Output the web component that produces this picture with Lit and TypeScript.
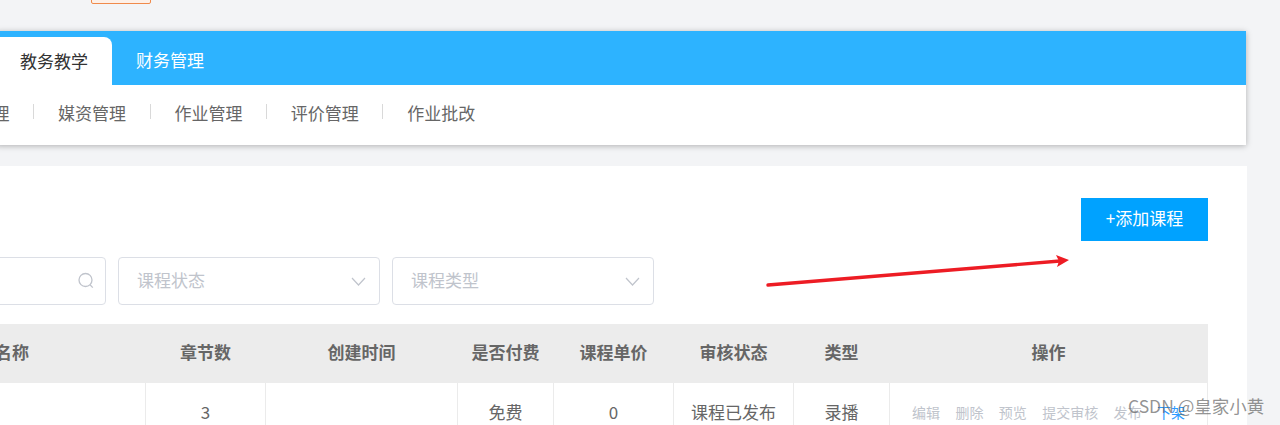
import { LitElement, html, css, svg } from "lit";
import { customElement } from "lit/decorators.js";

const HEAD = ["课程名称", "章节数", "创建时间", "是否付费", "课程单价", "审核状态", "类型", "操作"];
const ROW = ["", "3", "", "免费", "0", "课程已发布", "录播"];
const OPS = ["编辑", "删除", "预览", "提交审核", "发布"];
const NAV = ["课程管理", "媒资管理", "作业管理", "评价管理", "作业批改"];

@customElement("app-root")
export class AppRoot extends LitElement {
  static styles = css`
    :host {
      display: block;
      position: relative;
      width: 1280px;
      height: 425px;
      overflow: hidden;
      background: #f3f4f6;
      font-family: "Noto Sans CJK SC", "Liberation Sans", sans-serif;
      font-size: 17px;
      color: #666;
    }
    .top { height: 4px; padding-left: 91px; overflow: hidden; }
    .top-btn {
      width: 60px; height: 14px; margin-top: -10px; box-sizing: border-box;
      border: 1px solid #f08a4b; border-radius: 2px; background: #fdf0e8;
    }
    .head {
      margin: 27px 0 0 -4px; width: 1250px; background: #fff;
      box-shadow: 0 1px 6px rgba(0, 0, 0, 0.28);
    }
    .tabs { display: flex; height: 54px; box-sizing: border-box; padding-top: 6px; background: #2db3ff; }
    .tab {
      display: flex; align-items: center; width: 115.5px; padding-left: 24px; box-sizing: border-box;
      padding-bottom: 2px; color: #fff;
    }
    .tab.on { background: #fff; color: #333; border-radius: 0 8px 0 0; }
    .tab.off { padding-left: 24.5px; width: 120px; padding-bottom: 0; margin-top: -4px; height: 52px; }
    .nav { display: flex; align-items: center; height: 60px; margin-left: -54.4px; padding-bottom: 5px; box-sizing: border-box; }
    .nav-item { width: 116.4px; box-sizing: border-box; padding-left: 0; position: relative; line-height: 17px; flex: none; }
    .nav-item span { display: block; }
    .nav-item i { display: block; position: absolute; left: 91.5px; top: 0; width: 1px; height: 15px; background: #d9d9d9; }
    .nav-item:last-child i { display: none; }
    .card {
      margin: 21px 33px 0 -155px; padding: 32px 39px 0 0; background: #fff; height: 300px;
      box-sizing: border-box;
    }
    .actions { display: flex; justify-content: flex-end; }
    .add {
      width: 127px; height: 43px; display: flex; align-items: center; justify-content: center;
      background: #00a2ff; color: #fff; padding-bottom: 4px; box-sizing: border-box;
    }
    .filters { display: flex; gap: 12px; margin-top: 16px; }
    .field {
      display: flex; align-items: center; justify-content: space-between; height: 48px; width: 262px;
      box-sizing: border-box; padding: 0 13px 0 19px; border: 1px solid #dcdfe6; border-radius: 4px; color: #c0c4cc;
    }
    .field span { padding-bottom: 4px; margin-left: -1px; }
    .field.search { width: 261px; padding-right: 10px; }
    .field svg { display: block; flex: none; }
    .table { display: grid; grid-template-columns: 301px 120px 192px 96px 120px 120px 96px 318px; margin-top: 19px; width: 1363px; }
    .th {
      height: 59px; background: #ececec; display: flex; align-items: center; justify-content: center;
      font-weight: 700; color: #666; padding: 0 1px 5px 0; box-sizing: border-box;
    }
    .td {
      height: 60px; display: flex; align-items: center; justify-content: center;
      border-right: 1px solid #ebebeb; box-sizing: border-box; color: #666; padding-bottom: 4px;
    }
    .ops { gap: 15.4px; font-size: 14px; color: #c0c4cc; padding-left: 0; padding-bottom: 2px; }
    .ops .live { color: #2b9bff; }
    .arrow { position: absolute; left: 0; top: 0; pointer-events: none; }
    .mark {
      position: absolute; left: 1128px; top: 392px; font-size: 17.5px; line-height: 28px;
      color: rgba(100, 100, 100, 0.7); white-space: nowrap;
    }
  `;

  render() {
    return html`
      <div class="top"><div class="top-btn"></div></div>
      <div class="head">
        <div class="tabs">
          <div class="tab on">教务教学</div>
          <div class="tab off">财务管理</div>
        </div>
        <div class="nav">
          ${NAV.map((n) => html`<div class="nav-item"><span>${n}</span><i></i></div>`)}
        </div>
      </div>
      <div class="card">
        <div class="actions"><div class="add">+添加课程</div></div>
        <div class="filters">
          <div class="field search">
            <span></span>
            <svg width="18" height="18" viewBox="0 0 18 18" fill="none" stroke="#c0c4cc" stroke-width="1.3">
              <circle cx="8.5" cy="8" r="6.5"></circle>
              <path d="M13 12.8L15.8 15.6"></path>
            </svg>
          </div>
          ${["课程状态", "课程类型"].map(
            (t) => html`<div class="field">
              <span>${t}</span>
              <svg width="15" height="9" viewBox="0 0 15 9" fill="none" stroke="#c0c4cc" stroke-width="1.2">
                <path d="M1 1L7.5 8L14 1"></path>
              </svg>
            </div>`
          )}
        </div>
        <div class="table">
          ${HEAD.map((h) => html`<div class="th">${h}</div>`)}
          ${ROW.map((c) => html`<div class="td">${c}</div>`)}
          <div class="td ops">
            ${OPS.map((o) => html`<span>${o}</span>`)}
            <span class="live">下架</span>
          </div>
        </div>
      </div>
      <svg class="arrow" width="1280" height="425" viewBox="0 0 1280 425">
        ${svg`<path d="M768 285L1060 261" stroke="#ed1c24" stroke-width="3.4" stroke-linecap="round" fill="none"></path>
        <path d="M1069 260L1056 255L1059 261L1057 267Z" fill="#ed1c24"></path>`}
      </svg>
      <div class="mark">CSDN @皇家小黄</div>
    `;
  }
}
